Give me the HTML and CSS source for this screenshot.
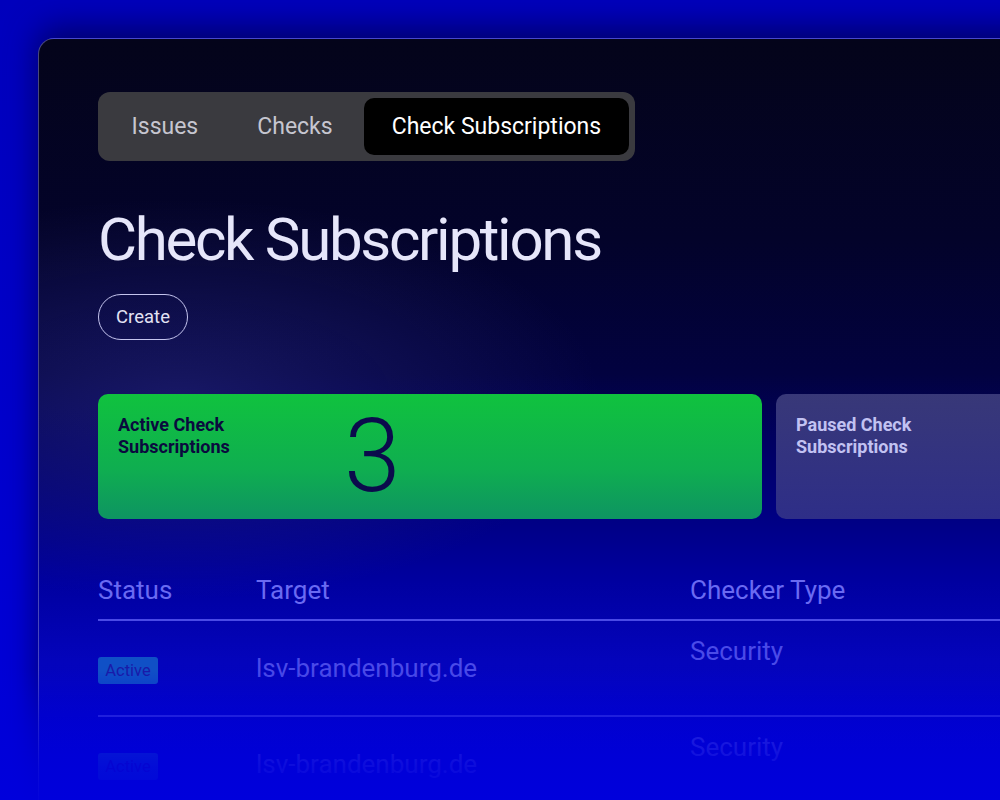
FILE: index.html
```html
<!DOCTYPE html>
<html lang="en">
<head>
<meta charset="utf-8">
<title>Check Subscriptions</title>
<link rel="stylesheet" href="styles.css">
</head>
<body>
<div class="stage">
  <div class="window">
    <nav class="tabs">
      <span class="tab">Issues</span>
      <span class="tab">Checks</span>
      <span class="tab active">Check Subscriptions</span>
    </nav>
    <h1 class="title">Check Subscriptions</h1>
    <button class="create">Create</button>
    <div class="cards">
      <div class="card card-active">
        <div class="card-label">Active Check<br>Subscriptions</div>
        <div class="card-num">3</div>
      </div>
      <div class="card card-paused">
        <div class="card-label">Paused Check<br>Subscriptions</div>
      </div>
    </div>
    <div class="table">
      <div class="row head">
        <div class="c-status">Status</div>
        <div class="c-target">Target</div>
        <div class="c-type">Checker Type</div>
      </div>
      <div class="row">
        <div class="c-status"><span class="badge">Active</span></div>
        <div class="c-target">lsv-brandenburg.de</div>
        <div class="c-type top">Security</div>
      </div>
      <div class="row">
        <div class="c-status"><span class="badge">Active</span></div>
        <div class="c-target">lsv-brandenburg.de</div>
        <div class="c-type top">Security</div>
      </div>
    </div>
  </div>
  <div class="fade"></div>
</div>
</body>
</html>
```

FILE: styles.css
```css
html, body {
  margin: 0;
  padding: 0;
  width: 1000px;
  height: 800px;
  overflow: hidden;
  background: #0000c6;
}
body {
  font-family: Roboto, "Liberation Sans", sans-serif;
}
.stage {
  position: relative;
  width: 1000px;
  height: 800px;
  padding: 38px 0 0 38px;
  box-sizing: border-box;
  overflow: hidden;
  background: linear-gradient(180deg, #0000bc 0%, #0000c8 40%, #0000dc 100%);
}
.window {
  width: 1100px;
  height: 800px;
  box-sizing: border-box;
  padding: 53px 0 0 59px;
  border: 1px solid rgba(130, 130, 200, 0.55);
  border-right: none;
  border-bottom: none;
  border-top-left-radius: 16px;
  box-shadow: 0 -10px 32px 0 rgba(0, 0, 70, 0.7);
  background:
    radial-gradient(ellipse 420px 200px at 140px 360px, rgba(45, 45, 130, 0.5), rgba(45, 45, 130, 0) 100%),
    linear-gradient(180deg, #04041a 0%, #03032a 25%, #020240 42%, #000060 50%, #0000a0 68%, #0404bc 78%, #0000cc 90%, #0000d6 100%);
  overflow: hidden;
}
.tabs {
  display: inline-flex;
  gap: 4px;
  padding: 6px;
  background: #3a3a3f;
  border-radius: 12px;
  white-space: nowrap;
}
.tab {
  display: flex;
  align-items: center;
  height: 57px;
  padding: 0 27.5px;
  font-size: 23px;
  color: #c6c6d0;
  border-radius: 10px;
}
.tab.active {
  background: #000000;
  color: #ffffff;
}
.title {
  margin: 43px 0 0 0;
  font-size: 60px;
  line-height: 72px;
  font-weight: 400;
  letter-spacing: -2.3px;
  color: #e6e6fa;
  white-space: nowrap;
}
.create {
  display: block;
  margin-top: 18px;
  height: 46px;
  width: 90px;
  padding: 0;
  border: 1.5px solid #c4c4ee;
  border-radius: 23px;
  background: transparent;
  color: #e2e2f4;
  font-family: Roboto, "Liberation Sans", sans-serif;
  font-size: 18.5px;
}
.cards {
  display: grid;
  grid-template-columns: 664px 664px;
  gap: 14px;
  margin-top: 54px;
}
.card {
  height: 125px;
  border-radius: 10px;
  box-sizing: border-box;
  padding: 20px;
  display: flex;
}
.card-active {
  background: linear-gradient(180deg, #10c23e 0%, #0fae50 60%, #0e9462 100%);
}
.card-paused {
  background: linear-gradient(180deg, #383878 0%, #2e2e88 100%);
}
.card-label {
  width: 226px;
  flex: none;
  font-weight: 700;
  font-size: 18px;
  line-height: 22px;
  color: #0a0a3e;
}
.card-paused .card-label {
  color: #c2c2f2;
}
.card-num {
  margin-top: -8px;
  font-size: 102px;
  line-height: 100px;
  font-weight: 300;
  color: #0b0b4c;
}
.table {
  margin-top: 55px;
  width: 1000px;
}
.row {
  display: grid;
  grid-template-columns: 158px 434px 1fr;
  align-items: center;
  height: 96px;
  box-sizing: border-box;
  border-bottom: 2px solid #3c3ce2;
  font-size: 26px;
  line-height: 32px;
  color: #4a4ae8;
  white-space: nowrap;
}
.row.head {
  height: 47px;
  align-items: start;
  color: #6a6af2;
  border-bottom-color: #4a4ae6;
}
.c-type.top {
  align-self: start;
  padding-top: 14px;
}
.badge {
  display: inline-block;
  width: 60px;
  height: 27px;
  line-height: 28px;
  text-align: center;
  font-size: 16.5px;
  border-radius: 3px;
  background: #1050c6;
  color: #1a1aa8;
  vertical-align: middle;
}
.fade {
  position: absolute;
  left: 0;
  right: 0;
  bottom: 0;
  height: 130px;
  background: linear-gradient(180deg, rgba(0, 0, 214, 0) 0%, rgba(0, 0, 216, 0.55) 40%, rgba(0, 0, 218, 0.85) 75%, rgba(0, 0, 220, 0.95) 100%);
  pointer-events: none;
}
```
